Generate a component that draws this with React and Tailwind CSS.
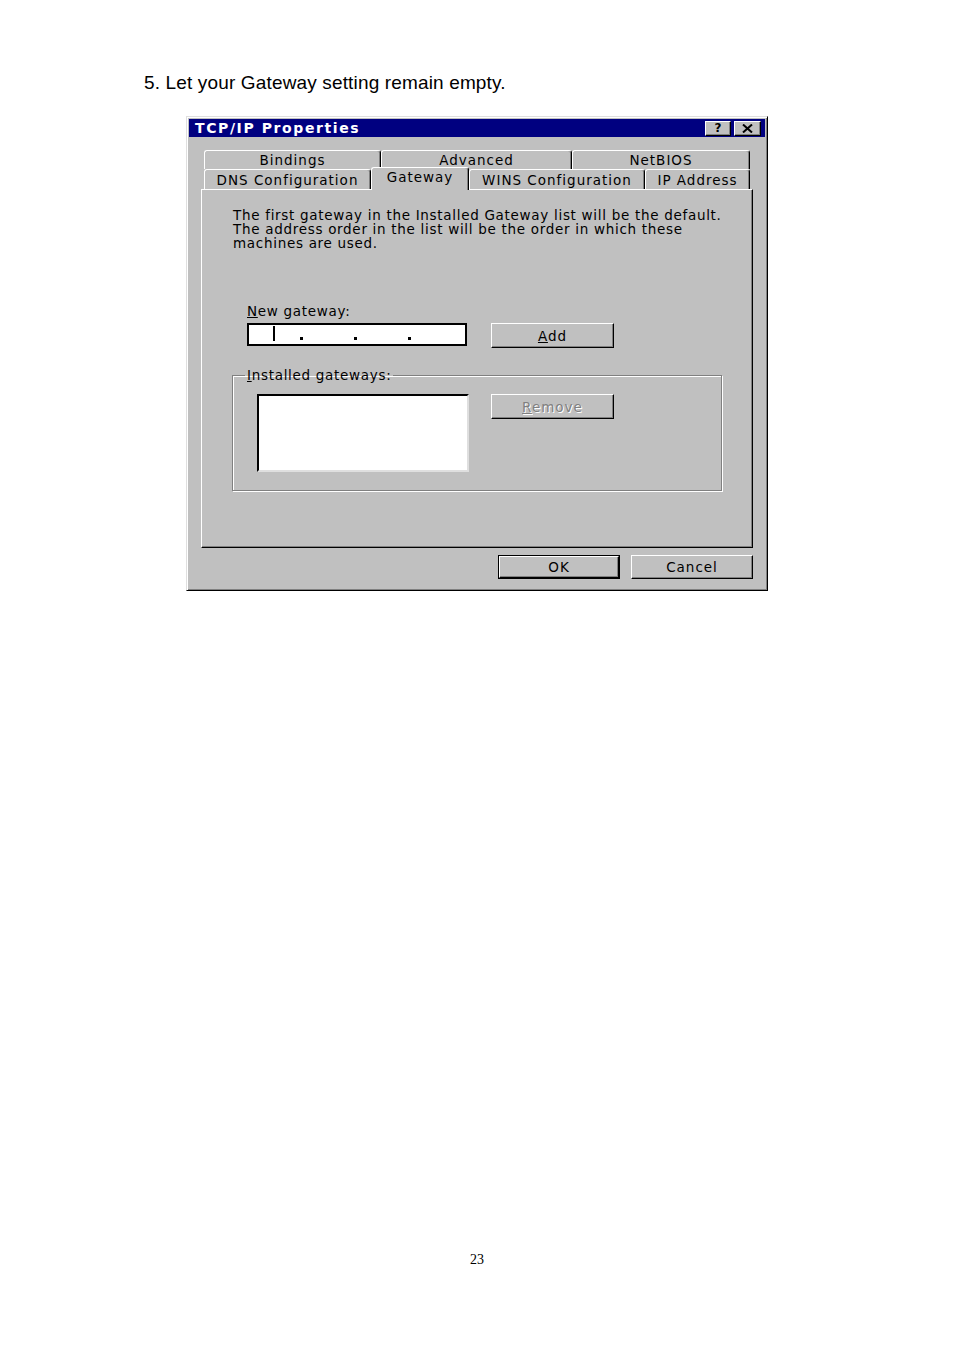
import React from "react";

const raised =
  "border border-white border-r-black border-b-black shadow-[inset_-1px_-1px_#808080]";

function Tab({ label, w, selected }) {
  return (
    <div
      className={`${w} flex items-center justify-center rounded-t-[3px] border border-white border-r-black border-b-0 shadow-[inset_-1px_0_#808080] tracking-[1px] ${
        selected ? "relative z-10 h-[23px] -mb-[1px] pb-[3px] bg-[#c0c0c0]" : "h-full pt-[1px]"
      }`}
    >
      {label}
    </div>
  );
}

function Button({ children, className = "", disabled }) {
  return (
    <div
      className={`${raised} flex items-center justify-center tracking-[1px] ${
        disabled ? "text-[#808080] [text-shadow:1px_1px_0_#fff]" : "text-black"
      } ${className}`}
    >
      {children}
    </div>
  );
}

export default function App() {
  return (
    <div className="min-h-[1351px] bg-white font-['Liberation_Sans',Arial,sans-serif] text-black">
      <div className="pt-[72px] pl-[144px] text-[19px] leading-[22px] tracking-[0.15px]">
        5. Let your Gateway setting remain empty.
      </div>

      {/* dialog */}
      <div className="mt-[22px] ml-[186px] w-[582px] h-[475px] bg-[#c0c0c0] border border-[#dfdfdf] border-r-black border-b-black shadow-[inset_1px_1px_#fff,inset_-1px_-1px_#808080] p-[2px] font-['DejaVu_Sans',sans-serif] text-[13.5px] tracking-[0.7px]">
        <div className="h-[18px] bg-[#000080] flex items-center justify-between pl-[6px] pr-[4px]">
          <span className="text-white font-bold text-[14px] tracking-[1.6px]">
            TCP/IP Properties
          </span>
          <div className="flex gap-[3px]">
            <div className={`${raised} w-[26px] h-[15px] bg-[#c0c0c0] flex items-center justify-center font-bold text-[12px] leading-none tracking-normal`}>
              ?
            </div>
            <div className={`${raised} w-[27px] h-[15px] bg-[#c0c0c0] flex items-center justify-center`}>
              <svg width="11" height="9" viewBox="0 0 11 9">
                <path d="M1 0.5 L10 8.5 M10 0.5 L1 8.5" stroke="black" strokeWidth="2" />
              </svg>
            </div>
          </div>
        </div>

        <div className="mt-[13px] ml-[12px]">
          <div className="pl-[3px]">
            <div className="flex h-[19px]">
              <Tab label="Bindings" w="w-[177px]" />
              <Tab label="Advanced" w="w-[191px]" />
              <Tab label="NetBIOS" w="w-[178px]" />
            </div>
            <div className="flex h-[20px] items-end">
              <Tab label="DNS Configuration" w="w-[167px]" />
              <Tab label="Gateway" w="w-[98px]" selected />
              <Tab label="WINS Configuration" w="w-[176px]" />
              <Tab label="IP Address" w="w-[105px]" />
            </div>
          </div>

          {/* panel */}
          <div className="w-[552px] h-[359px] border border-white border-r-black border-b-black shadow-[inset_-1px_-1px_#808080] pt-[18px] pl-[30px] leading-[14px]">
            <div className="ml-[1px] whitespace-nowrap">
              <div>The first gateway in the Installed Gateway list will be the default.</div>
              <div>The address order in the list will be the order in which these</div>
              <div>machines are used.</div>
            </div>

            <div className="mt-[54px] ml-[15px]">
              <div>
                <span className="underline">N</span>ew gateway:
              </div>
              <div className="mt-[5px] flex items-start gap-[24px]">
                <div className="w-[220px] h-[23px] bg-white border-2 border-black flex items-end pb-[4px]">
                  <div className="ml-[24px] w-[2px] h-[15px] bg-black mb-[-1px]" />
                  <div className="ml-[25px] w-[3px] h-[3px] bg-black" />
                  <div className="ml-[51px] w-[3px] h-[3px] bg-black" />
                  <div className="ml-[51px] w-[3px] h-[3px] bg-black" />
                </div>
                <Button className="w-[123px] h-[25px]">
                  <span>
                    <span className="underline">A</span>dd
                  </span>
                </Button>
              </div>
            </div>

            <fieldset className="mt-[20px] w-[490px] border border-[#808080] shadow-[1px_1px_0_#fff,inset_1px_1px_0_#fff] pt-[12px] pb-[18px]">
              <legend className="ml-[12px] px-[2px] leading-[14px]">
                <span className="underline">I</span>nstalled gateways:
              </legend>
              <div className="ml-[24px] flex items-start gap-[22px]">
                <div className="w-[212px] h-[78px] bg-white border-2 border-l-black border-t-black border-r-[#dfdfdf] border-b-[#dfdfdf]" />
                <Button className="w-[123px] h-[25px]" disabled>
                  <span>
                    <span className="underline">R</span>emove
                  </span>
                </Button>
              </div>
            </fieldset>
          </div>

          <div className="mt-[7px] flex justify-end gap-[11px] w-[552px]">
            <div className="border border-black">
              <Button className="w-[120px] h-[22px]">OK</Button>
            </div>
            <Button className="w-[122px] h-[24px]">Cancel</Button>
          </div>
        </div>
      </div>

      <div className="mt-[661px] text-center font-['Liberation_Serif',serif] text-[14px] leading-[16px]">
        23
      </div>
    </div>
  );
}
